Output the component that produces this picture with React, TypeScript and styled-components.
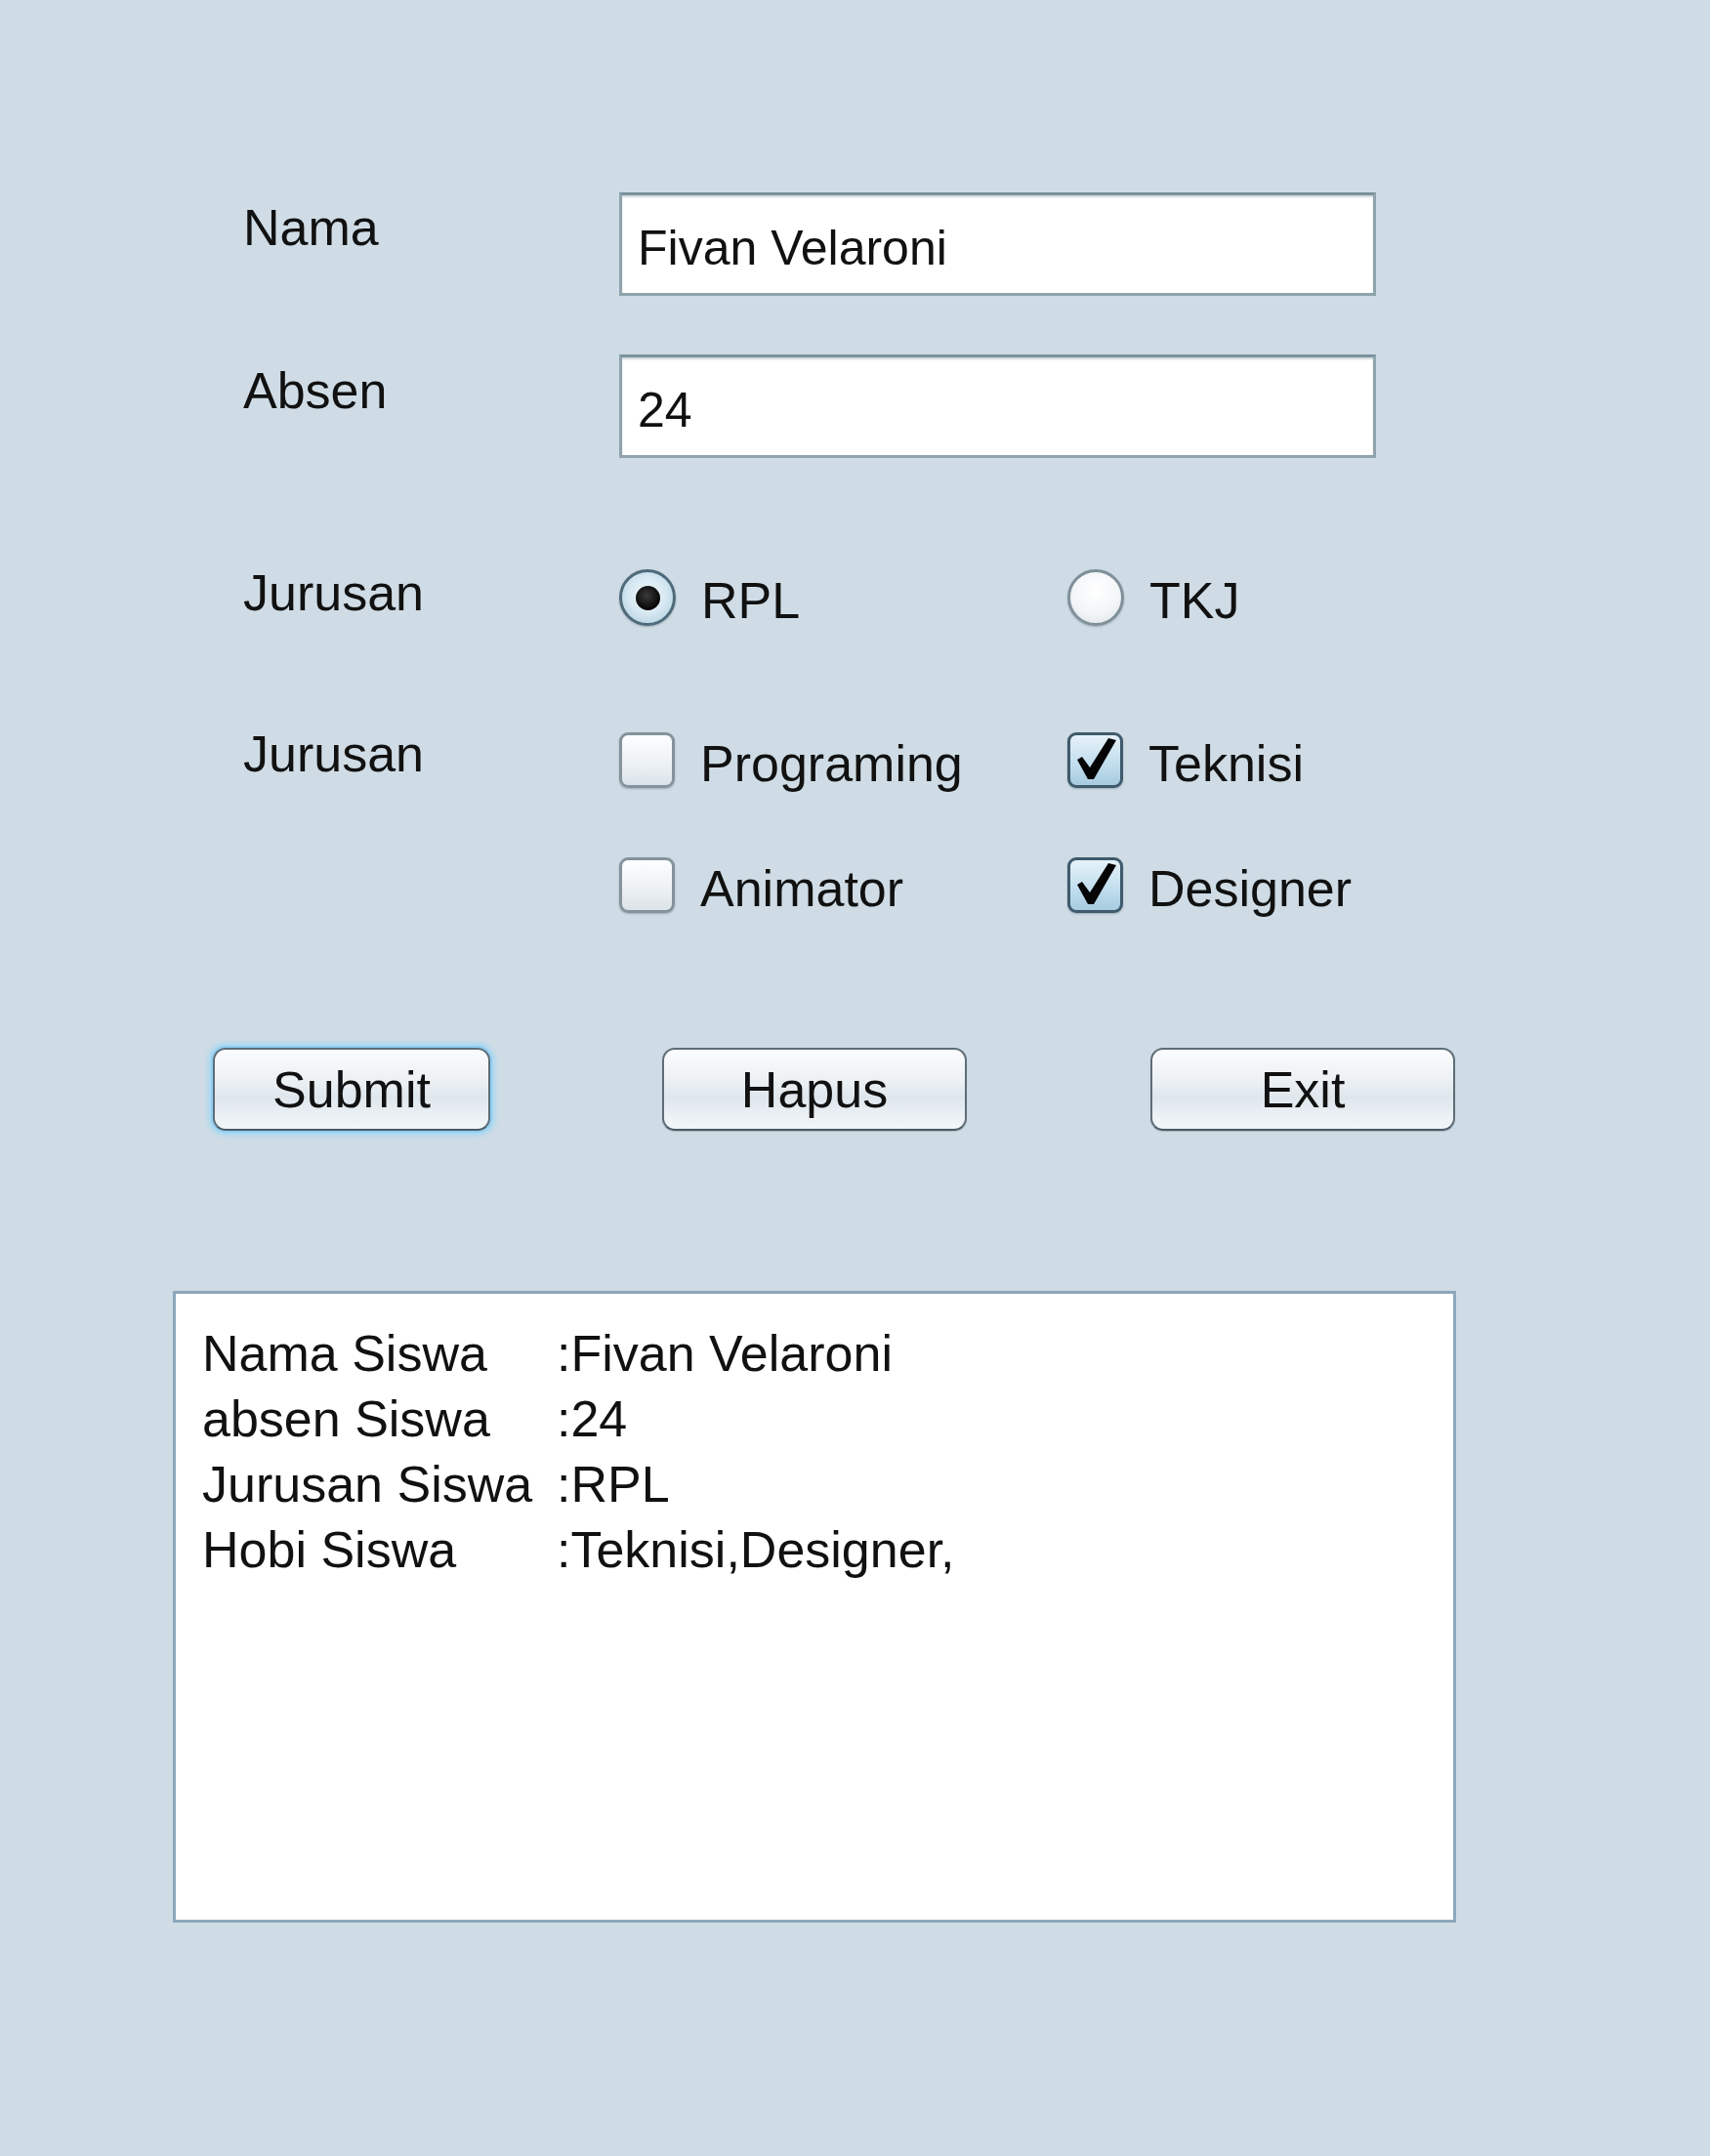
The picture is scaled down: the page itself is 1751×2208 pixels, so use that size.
import styled, { createGlobalStyle } from "styled-components";

const GlobalStyle = createGlobalStyle`
  html, body {
    margin: 0;
    padding: 0;
  }
  body {
    background: #cfdce5;
    font-family: "Liberation Sans", Arial, sans-serif;
    color: #111;
  }
`;

const Page = styled.div`
  width: 1751px;
  min-height: 2208px;
  box-sizing: border-box;
  padding-top: 197px;
  display: flex;
  flex-direction: column;
  background: #cfdce5;
`;

const FormRow = styled.div<{ $top?: number; $height: number }>`
  display: grid;
  grid-template-columns: 385px 459px 1fr;
  align-items: start;
  padding-left: 249px;
  margin-top: ${(p) => p.$top ?? 0}px;
  height: ${(p) => p.$height}px;
`;

const Label = styled.div<{ $offset: number }>`
  font-size: 52px;
  line-height: 60px;
  margin-top: ${(p) => p.$offset}px;
  white-space: nowrap;
`;

const Spacer = styled.div``;

const TextField = styled.input`
  grid-column: 2 / span 2;
  width: 775px;
  height: 106px;
  box-sizing: border-box;
  border: 3px solid #8fa4ad;
  border-top-color: #7b929c;
  box-shadow: inset 0 2px 2px rgba(110, 135, 145, 0.35);
  background: #fff;
  padding: 8px 16px 0;
  font-family: "Liberation Sans", Arial, sans-serif;
  font-size: 50px;
  color: #111;
  outline: none;
`;

const Option = styled.div`
  display: flex;
  align-items: flex-start;
  gap: 26px;
`;

const OptionText = styled.span`
  font-size: 52px;
  line-height: 56px;
  margin-top: 4px;
  white-space: nowrap;
`;

const RadioCircle = styled.span<{ $checked?: boolean }>`
  width: 58px;
  height: 58px;
  box-sizing: border-box;
  border-radius: 50%;
  border: 3px solid ${(p) => (p.$checked ? "#4f6a7a" : "#7f909a")};
  background: ${(p) =>
    p.$checked
      ? "radial-gradient(circle at 50% 45%, #f4f9fc 0%, #d6e8f2 50%, #a8c8db 100%)"
      : "radial-gradient(circle at 50% 35%, #ffffff 0%, #f2f5f7 60%, #d6dee4 100%)"};
  box-shadow: 0 1px 2px rgba(60, 80, 95, 0.35);
  display: flex;
  align-items: center;
  justify-content: center;
  flex-shrink: 0;
`;

const RadioDot = styled.span`
  width: 25px;
  height: 25px;
  border-radius: 50%;
  background: radial-gradient(circle at 45% 40%, #3a3a3a 0%, #050505 70%);
`;

const CheckBox = styled.span<{ $checked?: boolean }>`
  position: relative;
  width: 57px;
  height: 57px;
  box-sizing: border-box;
  border-radius: 9px;
  border: 3px solid ${(p) => (p.$checked ? "#3f5a6c" : "#84939c")};
  background: ${(p) =>
    p.$checked
      ? "linear-gradient(#e6f2f9, #c3dfee 55%, #a7cbe0)"
      : "linear-gradient(#fdfeff, #eef2f5 55%, #dbe3e9)"};
  box-shadow: 0 1px 2px rgba(60, 80, 95, 0.35);
  flex-shrink: 0;

  svg {
    position: absolute;
    left: 0;
    top: 0;
    overflow: visible;
  }
`;

const ButtonRow = styled.div`
  display: grid;
  grid-template-columns: 460px 500px 312px;
  padding-left: 218px;
  margin-top: 138px;
`;

const Button = styled.button<{ $width: number; $focused?: boolean }>`
  width: ${(p) => p.$width}px;
  height: 85px;
  box-sizing: border-box;
  border: 2px solid #5d6d77;
  border-bottom-color: #4b5a63;
  border-radius: 13px;
  background: linear-gradient(#fbfcfd 0%, #eef2f5 35%, #dfe7ed 60%, #f3f7fa 100%);
  box-shadow: ${(p) =>
    p.$focused
      ? "0 0 0 2px #8fcdf1, 0 0 5px 5px #a7d8f3"
      : "0 1px 1px rgba(70, 90, 100, 0.3)"};
  font-family: "Liberation Sans", Arial, sans-serif;
  font-size: 52px;
  color: #111;
  padding: 0;
  cursor: pointer;
`;

const OutputArea = styled.div`
  margin-top: 164px;
  margin-left: 177px;
  width: 1314px;
  height: 647px;
  box-sizing: border-box;
  border: 3px solid #8da7bb;
  background: #fff;
  padding: 28px 27px;
  display: grid;
  grid-template-columns: 363px 1fr;
  align-content: start;
  font-size: 52px;
  line-height: 67px;
`;

const OutputCell = styled.span`
  white-space: nowrap;
`;

const CheckMark = () => (
  <svg width="51" height="51" viewBox="0 0 51 51">
    <polygon points="7,25 12,22 20,33 39,3 47,5 24,45 18,45" fill="#050505" />
  </svg>
);

const output = [
  ["Nama Siswa", ":Fivan Velaroni"],
  ["absen Siswa", ":24"],
  ["Jurusan Siswa", ":RPL"],
  ["Hobi Siswa", ":Teknisi,Designer,"],
];

const App = (): JSX.Element => {
  return (
    <>
      <GlobalStyle />
      <Page>
        <FormRow $height={106}>
          <Label $offset={6}>Nama</Label>
          <TextField value="Fivan Velaroni" readOnly />
        </FormRow>
        <FormRow $top={60} $height={106}>
          <Label $offset={7}>Absen</Label>
          <TextField value="24" readOnly />
        </FormRow>
        <FormRow $top={114} $height={58}>
          <Label $offset={-6}>Jurusan</Label>
          <Option>
            <RadioCircle $checked>
              <RadioDot />
            </RadioCircle>
            <OptionText>RPL</OptionText>
          </Option>
          <Option>
            <RadioCircle />
            <OptionText>TKJ</OptionText>
          </Option>
        </FormRow>
        <FormRow $top={109} $height={57}>
          <Label $offset={-8}>Jurusan</Label>
          <Option>
            <CheckBox />
            <OptionText>Programing</OptionText>
          </Option>
          <Option>
            <CheckBox $checked>
              <CheckMark />
            </CheckBox>
            <OptionText>Teknisi</OptionText>
          </Option>
        </FormRow>
        <FormRow $top={71} $height={57}>
          <Spacer />
          <Option>
            <CheckBox />
            <OptionText>Animator</OptionText>
          </Option>
          <Option>
            <CheckBox $checked>
              <CheckMark />
            </CheckBox>
            <OptionText>Designer</OptionText>
          </Option>
        </FormRow>
        <ButtonRow>
          <Button $width={284} $focused>
            Submit
          </Button>
          <Button $width={312}>Hapus</Button>
          <Button $width={312}>Exit</Button>
        </ButtonRow>
        <OutputArea>
          {output.map(([k, v]) => (
            <>
              <OutputCell key={k}>{k}</OutputCell>
              <OutputCell key={k + "v"}>{v}</OutputCell>
            </>
          ))}
        </OutputArea>
      </Page>
    </>
  );
};

export default App;
